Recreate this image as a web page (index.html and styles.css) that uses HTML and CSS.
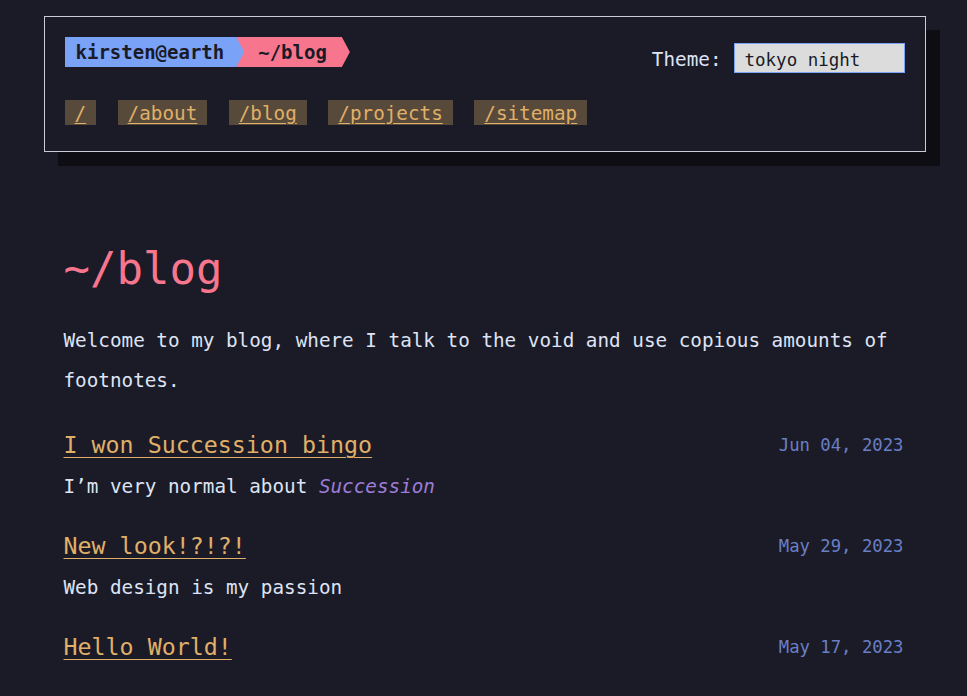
FILE: index.html
```html
<!DOCTYPE html>
<html lang="en">
<head>
<meta charset="utf-8">
<title>~/blog</title>
<link rel="stylesheet" href="styles.css">
</head>
<body>
<div class="page">
  <header class="site-header">
    <div class="top-row">
      <div class="prompt">
        <span class="seg seg-user">kirsten@earth</span>
        <span class="seg seg-path">~/blog</span>
      </div>
      <div class="theme">
        <label class="theme-label" for="theme">Theme:</label>
        <select id="theme" class="theme-select">
          <option>tokyo night</option>
        </select>
      </div>
    </div>
    <nav class="nav">
      <a class="nav-link" href="#">/</a>
      <a class="nav-link" href="#">/about</a>
      <a class="nav-link" href="#">/blog</a>
      <a class="nav-link" href="#">/projects</a>
      <a class="nav-link" href="#">/sitemap</a>
    </nav>
  </header>

  <main class="main">
    <h1 class="title">~/blog</h1>
    <p class="intro">Welcome to my blog, where I talk to the void and use copious amounts of footnotes.</p>

    <article class="post">
      <div class="post-head">
        <a class="post-title" href="#">I won Succession bingo</a>
        <span class="post-date">Jun 04, 2023</span>
      </div>
      <p class="post-desc">I’m very normal about <em class="hl">Succession</em></p>
    </article>

    <article class="post">
      <div class="post-head">
        <a class="post-title" href="#">New look!?!?!</a>
        <span class="post-date">May 29, 2023</span>
      </div>
      <p class="post-desc">Web design is my passion</p>
    </article>

    <article class="post">
      <div class="post-head">
        <a class="post-title" href="#">Hello World!</a>
        <span class="post-date">May 17, 2023</span>
      </div>
    </article>
  </main>
</div>
</body>
</html>
```

FILE: styles.css
```css
html, body {
  margin: 0;
  padding: 0;
  background: #1a1b26;
}

body {
  font-family: "DejaVu Sans Mono", "Liberation Mono", monospace;
  font-size: 19.3px;
  color: #cfd5f3;
  overflow: hidden;
}

.page {
  width: 840px;
  margin: 0 auto;
  padding-top: 16px;
}

.site-header {
  margin: 0 -22px 0 -20px;
  border: 1px solid #c9cbd6;
  padding: 20px 20px 26px 20px;
  box-shadow: 14px 14px 0 #0d0d13;
  background: #1a1b26;
}

.top-row {
  display: flex;
  justify-content: space-between;
  align-items: flex-start;
}

.prompt {
  display: flex;
  height: 30px;
  font-weight: bold;
  font-size: 19px;
  line-height: 31px;
  color: #1a1b26;
}

.seg {
  display: block;
  clip-path: polygon(0 0, calc(100% - 8px) 0, 100% 50%, calc(100% - 8px) 100%, 0 100%);
}

.seg-user {
  background: #7aa2f7;
  padding: 0 20px 0 11px;
  position: relative;
  z-index: 1;
}

.seg-path {
  background: #f7768e;
  margin-left: -8px;
  padding: 0 23px 0 22px;
}

.theme {
  display: flex;
  align-items: center;
  gap: 12px;
  margin-top: 6px;
  height: 30px;
}

.theme-label {
  font-size: 19.3px;
  color: #dfe3f5;
  padding-top: 2px;
}

.theme-select {
  -webkit-appearance: none;
  appearance: none;
  width: 171px;
  height: 30px;
  box-sizing: border-box;
  background: #dcdcdc;
  border: 1px solid #7aa2f7;
  border-radius: 0;
  color: #1a1b26;
  font-family: "DejaVu Sans Mono", "Liberation Mono", monospace;
  font-size: 17.5px;
  padding: 3px 10px 0 10px;
  margin: 0;
  outline: none;
}

.nav {
  display: flex;
  gap: 21.5px;
  margin-top: 27px;
}

.nav-link {
  display: block;
  background: #574a3a;
  color: #e0af68;
  text-decoration: underline;
  text-underline-offset: 3px;
  padding: 1px 10px 0 10px;
  line-height: 25px;
  height: 24px;
}

.main {
  padding-top: 91px;
}

.title {
  margin: 0;
  font-size: 44px;
  line-height: 52px;
  font-weight: normal;
  color: #f7768e;
}

.intro {
  margin: 26px 0 0 0;
  line-height: 40px;
  color: #dfe3f5;
}

.post {
  margin-top: 28px;
}

.post-head {
  display: flex;
  justify-content: space-between;
  align-items: center;
  height: 32px;
}

.post-title {
  font-size: 23.3px;
  line-height: 32px;
  color: #e0af68;
  text-decoration: underline;
  text-underline-offset: 4px;
  text-decoration-thickness: 1px;
}

.post-date {
  font-size: 17.28px;
  line-height: 20px;
  color: #6a7fc6;
}

.post-desc {
  margin: 11px 0 0 0;
  line-height: 30px;
  color: #dfe3f5;
}

.hl {
  color: #9d7cd8;
}
```
